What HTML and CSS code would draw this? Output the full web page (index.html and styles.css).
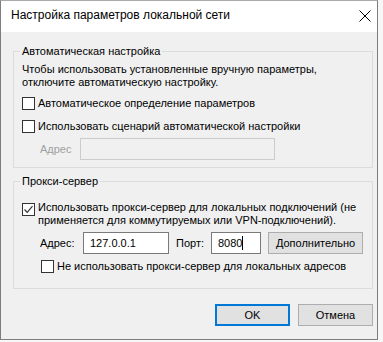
FILE: index.html
```html
<!DOCTYPE html>
<html lang="ru">
<head>
    <meta charset="UTF-8">
    <title>Настройка параметров локальной сети</title>
    <link rel="stylesheet" href="styles.css">
</head>
<body>
<div class="dialog">
    <div class="titlebar">
        <span class="title">Настройка параметров локальной сети</span>
        <svg class="close" width="12" height="12" viewBox="0 0 12 12">
            <path d="M0.5 0.5 L11.5 11.5 M11.5 0.5 L0.5 11.5" stroke="#000" stroke-width="1" fill="none"/>
        </svg>
    </div>
    <div class="content">
        <fieldset class="group group-auto">
            <legend>Автоматическая настройка</legend>
            <p class="desc">Чтобы использовать установленные вручную параметры,<br>отключите автоматическую настройку.</p>
            <label class="check row-first">
                <span class="box"></span>
                <span>Автоматическое определение параметров</span>
            </label>
            <label class="check row-next">
                <span class="box"></span>
                <span>Использовать сценарий автоматической настройки</span>
            </label>
            <div class="addr-row">
                <span class="muted">Адрес</span>
                <span class="field field-disabled"></span>
            </div>
        </fieldset>

        <fieldset class="group group-proxy">
            <legend>Прокси-сервер</legend>
            <label class="check check-multi">
                <span class="box box-checked">
                    <svg width="11" height="11" viewBox="0 0 11 11">
                        <polyline points="1.5,5.5 4.2,8.4 9.5,2.2" stroke="#333" stroke-width="1.2" fill="none"/>
                    </svg>
                </span>
                <span>Использовать прокси-сервер для локальных подключений (не<br>применяется для коммутируемых или VPN-подключений).</span>
            </label>
            <div class="proxy-row">
                <span class="lbl-addr">Адрес:</span>
                <span class="field field-addr">127.0.0.1</span>
                <span class="lbl-port">Порт:</span>
                <span class="field field-port">8080<i class="caret"></i></span>
                <button class="btn btn-more">Дополнительно</button>
            </div>
            <label class="check check-bypass">
                <span class="box"></span>
                <span>Не использовать прокси-сервер для локальных адресов</span>
            </label>
        </fieldset>

        <div class="actions">
            <button class="btn btn-default">OK</button>
            <button class="btn">Отмена</button>
        </div>
    </div>
</div>
</body>
</html>
```

FILE: styles.css
```css
* {
    box-sizing: border-box;
}
body {
    margin: 0;
    background: #f7f7f7;
    font: 11px/15px "Liberation Sans", Arial, sans-serif;
    color: #000;
}
.dialog {
    width: 378px;
    height: 340px;
    overflow: hidden;
    border: 1px solid #7d7d7d;
    border-top-color: #aaa;
    background: #f0f0f0;
}
.titlebar {
    display: flex;
    align-items: center;
    justify-content: space-between;
    height: 31px;
    padding: 0 6px 2px 10px;
    background: #fff;
    white-space: nowrap;
}
.title {
    font-size: 12px;
}
.close {
    margin-top: 1px;
}
.content {
    padding: 12px 4px 0 12px;
    white-space: nowrap;
}
.group {
    margin: 0;
    padding: 0 8px 7px;
    min-width: 0;
    border: 1px solid #dcdcdc;
}
.group legend {
    margin-left: -2px;
    padding: 0 2px;
    line-height: 15px;
}
.desc {
    margin: 4px 0 0;
    line-height: 13px;
}
.check {
    display: flex;
    align-items: center;
    gap: 3px;
}
.box {
    display: flex;
    align-items: center;
    justify-content: center;
    flex: none;
    width: 13px;
    height: 13px;
    border: 1px solid #333;
    background: #fff;
}
.row-first {
    margin-top: 7px;
}
.row-next {
    margin-top: 8px;
}
.addr-row {
    display: flex;
    align-items: center;
    margin-top: 4px;
    padding-left: 18px;
}
.muted {
    width: 40px;
    color: #a0a0a0;
}
.field {
    display: flex;
    align-items: center;
    height: 22px;
    border: 1px solid #7a7a7a;
    background: #fff;
}
.field-disabled {
    width: 195px;
    border-color: #ccc;
    background: #f0f0f0;
}
.group-proxy {
    margin-top: 6px;
    padding-bottom: 14px;
}
.check-multi {
    align-items: flex-start;
    margin-top: 12px;
    line-height: 13px;
}
.check-multi .box {
    margin-top: 2px;
}
.proxy-row {
    display: flex;
    align-items: center;
    margin-top: 5px;
    padding-left: 18px;
}
.lbl-addr {
    width: 43px;
}
.field-addr {
    width: 86px;
    padding-left: 6px;
}
.lbl-port {
    margin-left: 7px;
    width: 35px;
}
.field-port {
    width: 50px;
    padding-left: 6px;
}
.caret {
    width: 1px;
    height: 14px;
    background: #000;
}
.btn {
    height: 22px;
    padding: 0;
    border: 1px solid #adadad;
    background: #e1e1e1;
    font: inherit;
    color: #000;
}
.btn-more {
    width: 95px;
    margin-left: 7px;
}
.check-bypass {
    margin-top: 5px;
    padding-left: 19px;
}
.actions {
    display: flex;
    justify-content: flex-end;
    gap: 8px;
    margin-top: 15px;
}
.actions .btn {
    width: 75px;
}
.btn-default {
    border-color: #0078d7;
    box-shadow: inset 0 0 0 1px #0078d7;
}
```
